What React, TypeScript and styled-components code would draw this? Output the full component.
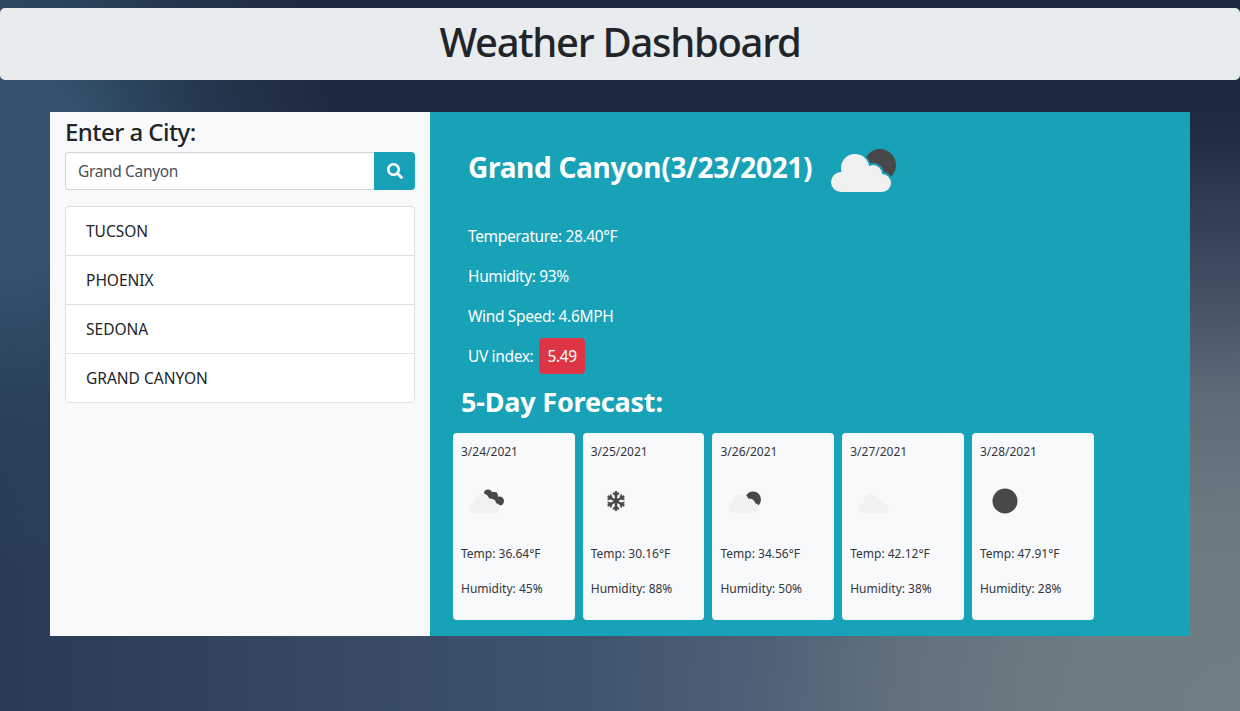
import React from 'react';
import styled, { createGlobalStyle } from 'styled-components';
import { FaSearch, FaSnowflake } from 'react-icons/fa';

const GlobalStyle = createGlobalStyle`
  html, body {
    margin: 0;
    padding: 0;
    height: 100%;
  }
  body {
    font-family: "Noto Sans", "Open Sans", sans-serif;
    font-size: 15.5px;
    line-height: 24px;
    letter-spacing: -0.35px;
    color: #212529;
    background-color: #283a58;
    background-image:
      radial-gradient(ellipse 340px 400px at 0 170px, #34536f 0%, #34536f 25%, rgba(52,83,111,0.35) 60%, rgba(52,83,111,0) 100%),
      radial-gradient(ellipse 636px 565px at 100% 100%, #6f7e84 0%, rgba(111,126,132,0.92) 30%, rgba(111,126,132,0.66) 55%, rgba(111,126,132,0.28) 75%, rgba(111,126,132,0) 100%),
      linear-gradient(180deg, #1d2a3d 0, #1d2a3d 100px, rgba(29,42,61,0) 520px),
      linear-gradient(90deg, #283a58 0, #435670 640px, #435670 100%);
  }
`;

const Page = styled.div`
  height: 711px;
  padding-top: 8px;
  box-sizing: border-box;
  overflow: hidden;
`;

const Banner = styled.header`
  height: 72px;
  background: #e9ecef;
  border-radius: 5px;
  display: flex;
  align-items: center;
  justify-content: center;
`;

const Title = styled.h1`
  margin: 0;
  padding-bottom: 4px;
  font-size: 40px;
  line-height: 48px;
  font-weight: 500;
  letter-spacing: -1.3px;
`;

const Board = styled.main`
  display: flex;
  width: 1140px;
  height: 524px;
  margin: 32px auto 0;
`;

const Sidebar = styled.aside`
  width: 380px;
  box-sizing: border-box;
  padding: 5px 15px 0;
  background: #f8f9fa;
`;

const SideHeading = styled.h4`
  margin: 0 0 6px;
  font-size: 24px;
  line-height: 29px;
  font-weight: 500;
  letter-spacing: -0.55px;
`;

const SearchRow = styled.form`
  display: flex;
  height: 38px;
  margin: 0 0 16px;
`;

const SearchInput = styled.input`
  flex: 1;
  min-width: 0;
  box-sizing: border-box;
  padding: 6px 12px;
  border: 1px solid #ced4da;
  border-right: 0;
  border-radius: 4px 0 0 4px;
  background: #fff;
  color: #495057;
  font: inherit;
  letter-spacing: inherit;
`;

const SearchButton = styled.button`
  width: 41px;
  display: flex;
  align-items: center;
  justify-content: center;
  padding: 0;
  border: 0;
  border-radius: 0 4px 4px 0;
  background: #17a2b8;
  color: #fff;
  font-size: 16px;
`;

const CityList = styled.ul`
  margin: 0;
  padding: 0;
  list-style: none;
  background: #fff;
  border: 1px solid #dfdfdf;
  border-radius: 4px;
`;

const CityItem = styled.li`
  box-sizing: border-box;
  height: 48px;
  padding-left: 20px;
  display: flex;
  align-items: center;
  letter-spacing: 0;
  & + & {
    height: 49px;
    border-top: 1px solid #dfdfdf;
  }
`;

const Panel = styled.section`
  flex: 1;
  box-sizing: border-box;
  padding: 6px 15px 0 23px;
  background: #17a2b8;
  color: #fff;
`;

const CurrentHead = styled.div`
  display: flex;
  align-items: center;
  height: 100px;
  padding-left: 15px;
  gap: 2px;
`;

const CityTitle = styled.h2`
  margin: 0;
  padding-bottom: 3px;
  font-size: 28px;
  line-height: 34px;
  font-weight: 700;
  letter-spacing: -0.3px;
`;

const Stat = styled.p`
  margin: 0 0 16px 15px;
  line-height: 24px;
  &:first-of-type {
    margin-top: 6px;
  }
`;

const UvRow = styled.div`
  display: flex;
  align-items: center;
  gap: 6px;
  height: 36px;
  margin: -6px 0 0 15px;
`;

const UvBadge = styled.span`
  padding: 6px 8px;
  border-radius: 4px;
  background: #dc3545;
  color: #fff;
`;

const ForecastHeading = styled.h3`
  margin: 11px 0 14px 8px;
  font-size: 27px;
  line-height: 34px;
  font-weight: 700;
  letter-spacing: -0.2px;
`;

const CardRow = styled.div`
  display: flex;
  gap: 8.15px;
`;

const Card = styled.article`
  width: 121.6px;
  height: 187px;
  box-sizing: border-box;
  padding: 9px 8px 8px;
  border-radius: 4px;
  background: #f8f9fa;
  color: #33373c;
  font-size: 12px;
  line-height: 20px;
  letter-spacing: 0;
`;

const CardLine = styled.div<{ $gap: number }>`
  margin-top: ${(p) => p.$gap}px;
`;

const IconSlot = styled.div`
  width: 50px;
  height: 50px;
  margin-top: 14px;
  display: flex;
  align-items: center;
  justify-content: center;
  color: #48484a;
  font-size: 20px;
`;

const CloudShape = ({ fill, stroke }: { fill: string; stroke?: string }) => (
  <g fill={fill} stroke={stroke} strokeWidth={stroke ? 4 : 0}>
    <circle cx="27" cy="64" r="10" />
    <circle cx="41" cy="50" r="14" />
    <circle cx="59" cy="56" r="9" />
    <circle cx="68" cy="65" r="9" />
    <rect x="27" y="55" width="41" height="19" />
  </g>
);

type IconKind = 'moonCloud' | 'brokenCloud' | 'cloud';

function WeatherIcon({ kind, size, id }: { kind: IconKind; size: number; id: string }) {
  return (
    <svg width={size} height={size} viewBox="0 0 100 100" style={{ flex: 'none' }}>
      <mask id={id}>
        <rect width="100" height="100" fill="#fff" />
        <CloudShape fill="#000" stroke="#000" />
      </mask>
      {kind === 'moonCloud' && <circle cx="66" cy="47" r="16" fill="#48484a" mask={`url(#${id})`} />}
      {kind === 'brokenCloud' && (
        <g fill="#48484a" mask={`url(#${id})`}>
          <circle cx="54" cy="35" r="8" />
          <circle cx="66" cy="40" r="8" />
          <circle cx="77" cy="50" r="9" />
          <rect x="52" y="33" width="20" height="14" />
        </g>
      )}
      <CloudShape fill="#f1f1f1" />
    </svg>
  );
}

const forecast = [
  { date: '3/24/2021', temp: '36.64', hum: '45', icon: <WeatherIcon kind="brokenCloud" size={50} id="f1" /> },
  { date: '3/25/2021', temp: '30.16', hum: '88', icon: <FaSnowflake /> },
  { date: '3/26/2021', temp: '34.56', hum: '50', icon: <WeatherIcon kind="moonCloud" size={50} id="f3" /> },
  { date: '3/27/2021', temp: '42.12', hum: '38', icon: <WeatherIcon kind="cloud" size={50} id="f4" /> },
  {
    date: '3/28/2021',
    temp: '47.91',
    hum: '28',
    icon: (
      <svg width={50} height={50} viewBox="0 0 100 100">
        <circle cx="50" cy="50" r="25" fill="#48484a" />
      </svg>
    ),
  },
];

const cities = ['TUCSON', 'PHOENIX', 'SEDONA', 'GRAND CANYON'];

export default function App() {
  return (
    <Page>
      <GlobalStyle />
      <Banner>
        <Title>Weather Dashboard</Title>
      </Banner>
      <Board>
        <Sidebar>
          <SideHeading>Enter a City:</SideHeading>
          <SearchRow onSubmit={(e) => e.preventDefault()}>
            <SearchInput defaultValue="Grand Canyon" />
            <SearchButton type="submit" aria-label="Search">
              <FaSearch />
            </SearchButton>
          </SearchRow>
          <CityList>
            {cities.map((c) => (
              <CityItem key={c}>{c}</CityItem>
            ))}
          </CityList>
        </Sidebar>
        <Panel>
          <CurrentHead>
            <CityTitle>Grand Canyon(3/23/2021)</CityTitle>
            <WeatherIcon kind="moonCloud" size={100} id="now" />
          </CurrentHead>
          <Stat>Temperature: 28.40°F</Stat>
          <Stat>Humidity: 93%</Stat>
          <Stat>Wind Speed: 4.6MPH</Stat>
          <UvRow>
            UV index: <UvBadge>5.49</UvBadge>
          </UvRow>
          <ForecastHeading>5-Day Forecast:</ForecastHeading>
          <CardRow>
            {forecast.map((d) => (
              <Card key={d.date}>
                <div>{d.date}</div>
                <IconSlot>{d.icon}</IconSlot>
                <CardLine $gap={18}>Temp: {d.temp}°F</CardLine>
                <CardLine $gap={15}>Humidity: {d.hum}%</CardLine>
              </Card>
            ))}
          </CardRow>
        </Panel>
      </Board>
    </Page>
  );
}
